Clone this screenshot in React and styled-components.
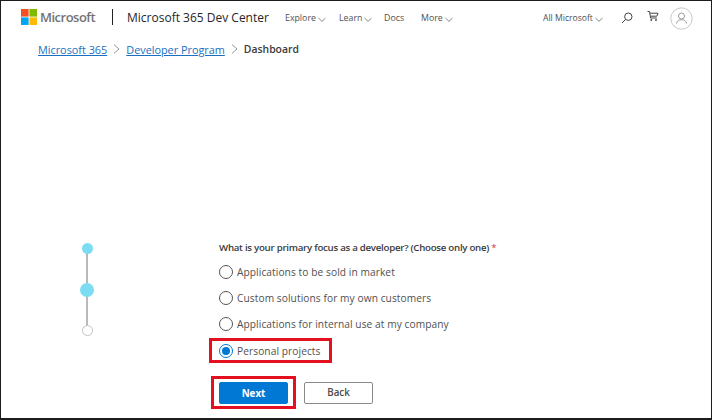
import React from "react";
import styled, { createGlobalStyle } from "styled-components";

const Global = createGlobalStyle`
  html, body { margin: 0; padding: 0; background: #fff; }
  body { font-family: "Open Sans", "Liberation Sans", sans-serif; }
`;

const Frame = styled.div`
  box-sizing: border-box;
  width: 712px;
  height: 420px;
  border-style: solid;
  border-color: #1c1c1c;
  border-width: 1px 1px 2px 1px;
  display: flex;
  flex-direction: column;
  overflow: hidden;
  background: #fff;
`;

const Header = styled.header`
  height: 33px;
  padding: 0 0 0 20px;
  display: flex;
  align-items: center;
`;

const Logo = styled.div`
  display: flex;
  align-items: center;
  gap: 3px;
  width: 91px;
  margin-top: -2px;
`;

const LogoGrid = styled.svg`
  width: 16px;
  height: 16px;
  flex: none;
`;

const LogoText = styled.span`
  font-size: 13px;
  font-weight: 600;
  letter-spacing: -0.5px;
  color: #737373;
`;

const Divider = styled.div`
  width: 1px;
  height: 16px;
  background: #222;
  margin-top: -1px;
`;

const Title = styled.span`
  margin-left: 14px;
  width: 158px;
  font-size: 12px;
  font-weight: 500;
  white-space: nowrap;
  color: #262626;
`;

const Nav = styled.nav`
  display: flex;
  align-items: center;
  font-size: 8.8px;
  color: #505050;
`;

const NavItem = styled.span`
  display: flex;
  align-items: center;
  gap: 2px;
  width: ${(p) => p.$w}px;
  white-space: nowrap;
`;

const AllItem = styled(NavItem)`
  font-size: 8.6px;
  margin-left: -2px;
`;

const Chevron = styled.svg`
  width: 8px;
  height: 5px;
  margin-top: 3px;
  flex: none;
`;

const Tools = styled.div`
  margin-left: auto;
  display: flex;
  align-items: center;
  font-size: 8.8px;
  color: #505050;
`;

const ToolIcon = styled.svg`
  flex: none;
  margin-left: ${(p) => p.$ml}px;
  margin-top: ${(p) => p.$mt || 0}px;
  margin-right: ${(p) => p.$mr || 0}px;
`;

const Crumbs = styled.div`
  margin-top: 7px;
  padding-left: 37px;
  height: 16px;
  display: flex;
  align-items: center;
  font-size: 10.85px;
  font-weight: 500;
`;

const Crumb = styled.a`
  color: #1a6fc0;
  text-decoration: underline;
  white-space: nowrap;
`;

const CrumbSep = styled.svg`
  width: 7px;
  height: 10px;
  margin: 0 6px 0 6px;
`;

const Current = styled.span`
  color: #3a3a3a;
  font-size: 10.4px;
  font-weight: 600;
`;

const Main = styled.main`
  margin-top: 184px;
  display: flex;
`;

const Stepper = styled.div`
  position: relative;
  width: 12px;
  height: 93px;
  margin: 2px 126px 0 80px;
  display: flex;
  flex-direction: column;
  align-items: center;
  justify-content: space-between;
`;

const Rail = styled.div`
  position: absolute;
  top: 6px;
  bottom: 6px;
  left: 5px;
  width: 2px;
  background: #b9b9b9;
`;

const Dot = styled.div`
  position: relative;
  box-sizing: border-box;
  width: ${(p) => p.$size}px;
  height: ${(p) => p.$size}px;
  border-radius: 50%;
  background: ${(p) => (p.$done ? "#7bdcf2" : "#fff")};
  border: ${(p) => (p.$done ? "none" : "1px solid #c4c4c4")};
`;

const Form = styled.form`
  display: flex;
  flex-direction: column;
  align-items: flex-start;
`;

const Question = styled.div`
  font-size: 9.7px;
  font-weight: 600;
  line-height: 14px;
  letter-spacing: -0.27px;
  color: #3b3b3b;
  white-space: nowrap;
  margin-bottom: 4px;

  b {
    color: #d13438;
    font-weight: 400;
  }
`;

const Option = styled.label`
  display: flex;
  align-items: center;
  gap: 4px;
  height: 26px;
  font-size: 10.2px;
  letter-spacing: 0.07px;
  color: #505050;
  white-space: nowrap;
`;

const Radio = styled.span`
  box-sizing: border-box;
  width: 14px;
  height: 14px;
  border-radius: 50%;
  border: 1px solid ${(p) => (p.$on ? "#0078d4" : "#555")};
  display: flex;
  align-items: center;
  justify-content: center;
  flex: none;

  &::after {
    content: "";
    display: ${(p) => (p.$on ? "block" : "none")};
    width: 8px;
    height: 8px;
    border-radius: 50%;
    background: #0078d4;
  }
`;

const Highlight = styled.div`
  box-sizing: border-box;
  border: 3px solid #e3101f;
  width: 123px;
  height: 25px;
  margin: 1px 0 0 -10px;
  padding-left: 7px;
  display: flex;
  align-items: center;

  ${Option} { height: auto; }
`;

const Actions = styled.div`
  margin-top: 13px;
  margin-left: -8px;
  display: flex;
  align-items: center;
`;

const NextWrap = styled.div`
  box-sizing: border-box;
  border: 3px solid #e3101f;
  width: 85px;
  height: 33px;
  padding: 3px 5px;
  display: flex;
`;

const Button = styled.button`
  box-sizing: border-box;
  width: 69px;
  height: 22px;
  padding: 0;
  border-radius: 2px;
  font-family: inherit;
  font-size: 9.8px;
  font-weight: 700;
  color: ${(p) => (p.$primary ? "#fff" : "#4a4a4a")};
  background: ${(p) => (p.$primary ? "#0078d4" : "#fff")};
  border: 1px solid ${(p) => (p.$primary ? "#0078d4" : "#8a8a8a")};
`;

const BackButton = styled(Button)`
  margin-left: 8px;
  font-weight: 600;
`;

const ChevronIcon = () => (
  <Chevron viewBox="0 0 8 5">
    <path d="M.5 1 4 4.4 7.500 1" fill="none" stroke="#666" strokeWidth=".8" />
  </Chevron>
);

const CrumbArrow = () => (
  <CrumbSep viewBox="0 0 7 10">
    <path d="M1 .7 6 5 1 9.300" fill="none" stroke="#8a8a8a" strokeWidth=".9" />
  </CrumbSep>
);

export default function App() {
  return (
    <Frame>
      <Global />
      <Header>
        <Logo>
          <LogoGrid viewBox="0 0 16 16">
            <rect width="7.600" height="7.600" fill="#f25022" />
            <rect x="8.400" width="7.600" height="7.600" fill="#7fba00" />
            <rect y="8.400" width="7.600" height="7.600" fill="#00a4ef" />
            <rect x="8.400" y="8.400" width="7.600" height="7.600" fill="#ffb900" />
          </LogoGrid>
          <LogoText>Microsoft</LogoText>
        </Logo>
        <Divider />
        <Title>Microsoft 365 Dev Center</Title>
        <Nav>
          <NavItem $w={54}>Explore <ChevronIcon /></NavItem>
          <NavItem $w={45}>Learn <ChevronIcon /></NavItem>
          <NavItem $w={37}>Docs</NavItem>
          <NavItem $w={40}>More <ChevronIcon /></NavItem>
        </Nav>
        <Tools>
          <AllItem $w={74}>All Microsoft <ChevronIcon /></AllItem>
          <ToolIcon $ml={4} width="12" height="12" viewBox="0 0 12 12">
            <circle cx="7.300" cy="4.700" r="3.700" fill="none" stroke="#444" strokeWidth="1" />
            <path d="M4.600 7.400 1 11" stroke="#444" strokeWidth="1" />
          </ToolIcon>
          <ToolIcon $ml={14} $mt={-3} width="12" height="11" viewBox="0 0 12 11">
            <path d="M.5.500H2.500L3.600 7H9.800M3 2.200H11L9.800 5.200H3.400" fill="none" stroke="#444" strokeWidth="1" />
            <circle cx="4.300" cy="9" r=".9" fill="#444" />
            <circle cx="9" cy="9" r=".9" fill="#444" />
          </ToolIcon>
          <ToolIcon $ml={11} $mt={1} $mr={18} width="23" height="23" viewBox="0 0 23 23">
            <circle cx="11.500" cy="11.500" r="10.700" fill="#fff" stroke="#c8c8c8" strokeWidth="1" />
            <circle cx="11.500" cy="9" r="3" fill="none" stroke="#9a9a9a" strokeWidth="1" />
            <path d="M6.500 16.500C6.800 13.800 9 12.700 11.500 12.700S16.200 13.800 16.500 16.500" fill="none" stroke="#9a9a9a" strokeWidth="1" />
          </ToolIcon>
        </Tools>
      </Header>
      <Crumbs>
        <Crumb>Microsoft 365</Crumb>
        <CrumbArrow />
        <Crumb>Developer Program</Crumb>
        <CrumbArrow />
        <Current>Dashboard</Current>
      </Crumbs>
      <Main>
        <Stepper>
          <Rail />
          <Dot $done $size={11} />
          <Dot $done $size={14} />
          <Dot $size={11} />
        </Stepper>
        <Form>
          <Question>What is your primary focus as a developer? (Choose only one) <b>*</b></Question>
          <Option><Radio />Applications to be sold in market</Option>
          <Option><Radio />Custom solutions for my own customers</Option>
          <Option><Radio />Applications for internal use at my company</Option>
          <Highlight>
            <Option><Radio $on />Personal projects</Option>
          </Highlight>
          <Actions>
            <NextWrap><Button $primary type="button">Next</Button></NextWrap>
            <BackButton type="button">Back</BackButton>
          </Actions>
        </Form>
      </Main>
    </Frame>
  );
}
